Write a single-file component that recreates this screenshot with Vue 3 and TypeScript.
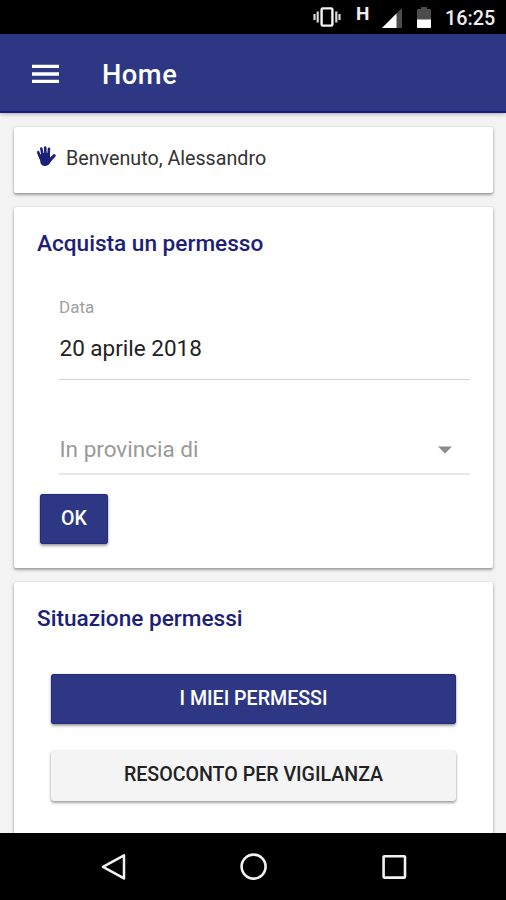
<script setup lang="ts">
import { ref } from 'vue'

const userName = ref('Alessandro')
const date = ref('20 aprile 2018')
const clock = ref('16:25')
</script>

<template>
  <div class="phone">
    <div class="status">
      <svg class="vibrate" viewBox="0 0 28 22" width="28" height="22">
        <path d="M1.5 8v6M4.7 5.5v11M23.3 5.5v11M26.5 8v6" stroke="#d8d8d8" stroke-width="2.2" fill="none" />
        <rect x="8.6" y="2.4" width="10.8" height="17.2" rx="1.2" stroke="#f4f4f4" stroke-width="2.4" fill="none" />
      </svg>
      <span class="network">H</span>
      <svg class="signal" viewBox="0 0 20 20" width="20" height="20">
        <path d="M20 0V20H0Z" fill="#4c4c4c" />
        <path d="M14.5 5.5V20H0Z" fill="#fff" />
      </svg>
      <svg class="battery" viewBox="0 0 14 21" width="14" height="21">
        <path d="M4 0h6v2h3q1 0 1 1v17q0 1-1 1H1q-1 0-1-1V3q0-1 1-1h3Z" fill="#4c4c4c" />
        <path d="M0 12.5h14V20q0 1-1 1H1q-1 0-1-1Z" fill="#fff" />
      </svg>
      <time class="clock">{{ clock }}</time>
    </div>

    <header class="toolbar">
      <button class="menu" aria-label="Menu">
        <svg viewBox="0 0 27 20" width="27" height="20">
          <path d="M0 2.4h27M0 10h27M0 17.4h27" stroke="#fff" stroke-width="3.4" />
        </svg>
      </button>
      <h1 class="title">Home</h1>
    </header>

    <main class="content">
      <section class="card welcome">
        <svg class="hand" viewBox="0 0 20 20" width="20" height="20">
          <g stroke="#1c2177" stroke-width="2.6" stroke-linecap="round" fill="none">
            <path d="M2.2 6.2 4.4 12M5.3 2.6 6.8 10M9.2 1.5 9.5 10M13 2.8 12.4 10" />
            <path d="M18.2 9.6 13.5 14.6" stroke-width="3" />
          </g>
          <path d="M3.2 9Q8 6 13.6 7.2L14.1 11.4Q15 11.4 17 10.4 15.4 16 13 18.5 11 20.2 8.4 20 5.6 19.8 4.6 17.2Z" fill="#1c2177" />
        </svg>
        <span class="greeting">Benvenuto, {{ userName }}</span>
      </section>

      <section class="card purchase">
        <h2 class="heading buy">Acquista un permesso</h2>
        <div class="field date">
          <label class="label">Data</label>
          <span class="value">{{ date }}</span>
        </div>
        <div class="field province">
          <span class="placeholder">In provincia di</span>
          <svg class="caret" viewBox="0 0 14 8" width="14" height="8">
            <path d="M0 .5h14L7 7.5Z" fill="#8c8c8c" />
          </svg>
        </div>
        <button class="btn primary ok"><span>OK</span></button>
      </section>

      <section class="card permits">
        <h2 class="heading state">Situazione permessi</h2>
        <button class="btn primary wide"><span class="mine">I MIEI PERMESSI</span></button>
        <button class="btn light wide"><span class="report">RESOCONTO PER VIGILANZA</span></button>
      </section>
    </main>

    <nav class="navbar">
      <svg viewBox="0 0 28 28" width="28" height="28">
        <path d="M24 2.4V25.4L3 13.9Z" stroke="#f2f2f2" stroke-width="2.5" stroke-linejoin="round" fill="none" />
      </svg>
      <svg viewBox="0 0 28 28" width="28" height="28">
        <circle cx="13.6" cy="13.6" r="12" stroke="#f2f2f2" stroke-width="2.6" fill="none" />
      </svg>
      <svg viewBox="0 0 28 28" width="28" height="28">
        <rect x="3.6" y="3.2" width="21.4" height="21.4" rx=".8" stroke="#f2f2f2" stroke-width="2.6" fill="none" />
      </svg>
    </nav>
  </div>
</template>

<style>
body {
  margin: 0;
}
</style>

<style scoped>
.phone {
  display: flex;
  flex-direction: column;
  width: 506px;
  height: 900px;
  overflow: hidden;
  background: #f3f3f3;
  font-family: Roboto, "Liberation Sans", sans-serif;
}
.status {
  display: flex;
  align-items: flex-start;
  flex: none;
  box-sizing: border-box;
  height: 34px;
  padding-left: 313px;
  background: #000;
  color: #eee;
}
.vibrate { margin-top: 6px; }
.network {
  width: 14px;
  margin: 3px 0 0 15px;
  font-size: 19px;
  line-height: 21px;
  font-weight: 700;
}
.signal { margin: 8px 0 0 12px; }
.battery { margin: 7px 0 0 15px; }
.clock {
  margin: 6px 0 0 14px;
  font-size: 19.8px;
  line-height: 25px;
  font-weight: 500;
  white-space: nowrap;
}
.toolbar {
  z-index: 1;
  display: flex;
  align-items: center;
  flex: none;
  box-sizing: border-box;
  height: 79px;
  padding: 0 0 0 32px;
  border-bottom: 2px solid #1b1c78;
  background: #2e3784;
  box-shadow: 0 1px 4px rgba(0, 0, 0, .3);
}
.menu {
  display: flex;
  padding: 2px 0 0;
  border: 0;
  background: none;
}
.title {
  margin: 4px 0 0 43px;
  color: #fff;
  font-size: 27.3px;
  line-height: 32px;
  font-weight: 500;
  letter-spacing: .5px;
}
.content {
  display: flex;
  flex: 1;
  flex-direction: column;
  gap: 14px;
  min-height: 0;
  padding: 14px 13px 0 14px;
  overflow: hidden;
}
.card {
  flex: none;
  box-sizing: border-box;
  border-radius: 2px;
  background: #fff;
  box-shadow: 0 2px 3px rgba(0, 0, 0, .34), 0 0 2px rgba(0, 0, 0, .16);
}
.welcome {
  display: flex;
  align-items: flex-start;
  height: 66px;
  padding: 19px 22px;
}
.greeting {
  margin: 1px 0 0 10px;
  color: #333;
  font-size: 19.7px;
  line-height: 24px;
}
.purchase {
  height: 361px;
  padding: 23px 23px 0;
}
.permits {
  display: flex;
  flex-direction: column;
  height: 270px;
  padding: 23px 23px 0;
}
.heading {
  margin: 0;
  color: #1c2177;
  font-size: 22.6px;
  line-height: 28px;
  font-weight: 500;
  white-space: nowrap;
}
.field {
  display: flex;
  box-sizing: border-box;
  margin-left: 22px;
}
.date {
  flex-direction: column;
  height: 122px;
  padding-top: 39px;
  border-bottom: 1px solid #d2d2d2;
}
.label {
  color: #a0a0a0;
  font-size: 17px;
  line-height: 20px;
}
.value {
  margin-top: 17px;
  padding-left: .5px;
  color: #222;
  font-size: 22.5px;
  line-height: 28px;
}
.province {
  align-items: flex-start;
  justify-content: space-between;
  height: 95px;
  padding: 55px 18px 0 0;
  border-bottom: 2px solid #e8e8e8;
}
.placeholder {
  padding-left: .5px;
  color: #999;
  font-size: 22.5px;
  line-height: 28px;
}
.caret { margin-top: 11px; }
.btn {
  display: flex;
  align-items: center;
  justify-content: center;
  height: 50px;
  padding: 0 0 2px;
  border: 0;
  border-radius: 3px;
  font-family: inherit;
  font-size: 19.6px;
  font-weight: 500;
  white-space: nowrap;
  box-shadow: 0 2px 3px rgba(0, 0, 0, .35), 0 0 2px rgba(0, 0, 0, .18);
}
.primary {
  background: #2e3784;
  color: #fff;
  outline: 1px solid #252b7e;
  outline-offset: -1px;
}
.light {
  padding-bottom: 4px;
  background: #f4f4f4;
  color: #222;
}
.ok {
  width: 68px;
  margin: 19px 0 0 3px;
}
.wide {
  flex: none;
  margin: 0 14px;
}
.state { margin-bottom: 41px; }
.permits .light { margin-top: 27px; }
.navbar {
  display: flex;
  align-items: center;
  flex: none;
  box-sizing: border-box;
  height: 67px;
  gap: 112px;
  padding: 0 0 0 100px;
  background: #000;
}
</style>
